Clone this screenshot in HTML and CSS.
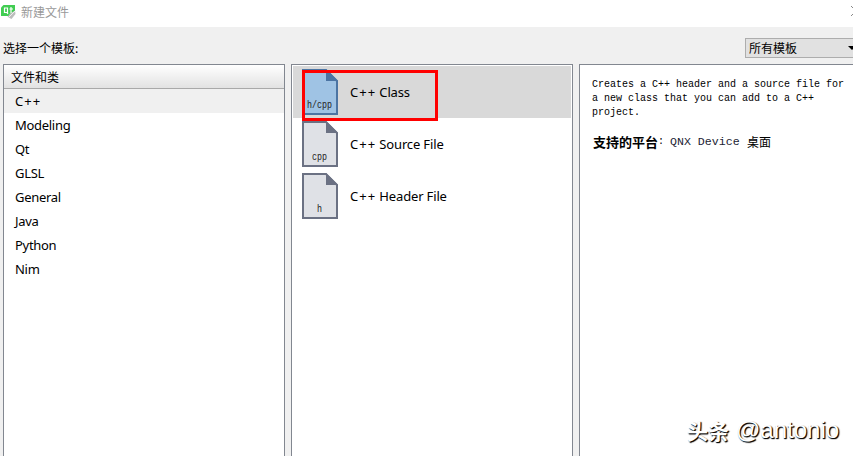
FILE: index.html
```html
<!DOCTYPE html>
<html lang="zh-CN">
<head>
<meta charset="utf-8">
<title>新建文件</title>
<link rel="stylesheet" href="styles.css">
</head>
<body>
<header class="titlebar">
  <svg class="logo" width="16" height="16" viewBox="0 0 16 16">
    <path d="M2.500 1H14V10L11.500 12H0V3.500Z" fill="#41cd52"/>
    <path d="M3.500 4H6.500V8.500H3.500ZM5.500 8L7 10M10 3V9H12M8.500 5H12" fill="none" stroke="#fff" stroke-width="1.200"/>
    <path d="M14 6.500L14.500 10L10.500 15L6.500 13L8.500 10Z" fill="#bdbdbd"/>
    <path d="M14 7L7 14" stroke="#eee" stroke-width="1"/>
  </svg>
  <span class="title">新建文件</span>
  <svg class="close" width="2" height="12" viewBox="0 0 2 12"><path d="M0 1L2 3M0 11L2 9" stroke="#888" fill="none"/></svg>
</header>
<div class="toolbar">
  <span class="prompt">选择一个模板:</span>
  <div class="select"><span>所有模板</span><i class="arrow"></i></div>
</div>
<main class="panels">
  <section class="panel">
    <div class="heading">文件和类</div>
    <ul class="categories">
      <li class="selected"><span class="wide">C++</span></li><li>Modeling</li><li>Qt</li><li>GLSL</li><li>General</li><li>Java</li><li>Python</li><li>Nim</li>
    </ul>
  </section>
  <section class="panel templates">
    <div class="template active">
      <svg class="file" width="36" height="46" viewBox="0 0 36 46"><path class="page" d="M1 1H24L35 12V45H1Z"/><path class="fold" d="M24 0L36 12H24Z"/><text x="5" y="39" textLength="25" lengthAdjust="spacingAndGlyphs">h/cpp</text></svg>
      <span><span class="wide">C++</span> Class</span>
      <div class="marker"></div>
    </div>
    <div class="template">
      <svg class="file" width="36" height="46" viewBox="0 0 36 46"><path class="page" d="M1 1H24L35 12V45H1Z"/><path class="fold" d="M24 0L36 12H24Z"/><text x="10" y="39" textLength="15" lengthAdjust="spacingAndGlyphs">cpp</text></svg>
      <span><span class="wide">C++</span> Source File</span>
    </div>
    <div class="template">
      <svg class="file" width="36" height="46" viewBox="0 0 36 46"><path class="page" d="M1 1H24L35 12V45H1Z"/><path class="fold" d="M24 0L36 12H24Z"/><text x="15" y="39" textLength="5" lengthAdjust="spacingAndGlyphs">h</text></svg>
      <span><span class="wide">C++</span> Header File</span>
    </div>
  </section>
  <section class="panel details">
    <p>Creates a C++ header and a source file for<br>a new class that you can add to a C++<br>project.</p>
    <p class="platforms"><b>支持的平台</b><span class="colon">:</span><span class="device">QNX Device</span><span class="desktop">桌面</span></p>
  </section>
</main>
<div class="watermark"><span class="brand">头条</span><span class="handle">@antonio</span></div>
</body>
</html>
```

FILE: styles.css
```css
* { box-sizing: border-box; }
body {
  margin: 0;
  width: 853px;
  height: 456px;
  overflow: hidden;
  display: flex;
  flex-direction: column;
  background: #f0f0f0;
  color: #000;
  font: 13px/24px "Noto Sans", "Noto Sans CJK SC", sans-serif;
}
.titlebar {
  height: 27px;
  flex: none;
  display: flex;
  align-items: flex-start;
  padding-top: 4px;
  background: #fff;
}
.logo { margin-left: 1px; }
.title {
  margin-left: 4px;
  color: #999;
  font: 12px/15px "Noto Sans CJK SC", sans-serif;
}
.close { margin: 1px 0 0 auto; }
.toolbar {
  height: 37px;
  flex: none;
  display: flex;
  justify-content: space-between;
  padding: 11px 0 0 3px;
  font: 12px/19px "Noto Sans CJK SC", sans-serif;
}
.select {
  width: 112px;
  height: 20px;
  margin-right: -4px;
  padding-left: 3px;
  display: flex;
  justify-content: space-between;
  border: 1px solid #adadad;
  background: #e1e1e1;
  line-height: 18px;
}
.arrow {
  width: 8px;
  height: 4px;
  margin: 7px 0 0;
  background: #000;
  clip-path: polygon(0 0, 100% 0, 50% 100%);
}
.panels {
  flex: 1;
  display: grid;
  grid-template-columns: 282px 282px 282px;
  gap: 6px;
  padding-left: 3px;
}
.panel {
  border: 1px solid #828790;
  border-bottom: 0;
  background: #fff;
  min-width: 0;
}
.heading {
  height: 24px;
  padding-left: 7px;
  border-bottom: 1px solid #a9a9a9;
  background: linear-gradient(#fff, #e2e2e2);
  font: 12px/24px "Noto Sans CJK SC", sans-serif;
}
.categories { margin: 0; padding: 0; list-style: none; letter-spacing: -0.3px; }
.categories li { height: 24px; padding-left: 11px; }
.categories .selected { background: #f0f0f0; }
.wide { letter-spacing: 1px; }
.templates { padding: 1px; }
.template {
  position: relative;
  height: 52px;
  display: flex;
  align-items: center;
  gap: 12px;
  padding-left: 9px;
  letter-spacing: -0.15px;
}
.active { background: #d9d9d9; }
.marker {
  position: absolute;
  left: 9px;
  top: 4px;
  width: 136px;
  height: 51px;
  border: 3px solid #f00;
  z-index: 1;
}
.page { fill: #dfe1e6; stroke: #6b7183; stroke-width: 2; }
.fold { fill: #6b7183; }
.active .page { fill: #9fc3e4; stroke: #4b74a3; }
.active .fold { fill: #4b74a3; }
.file text {
  font: 11px "Liberation Mono", monospace;
  letter-spacing: 0;
  fill: #222;
}
.details { padding: 13px 0 0 12px; font: 10px/14px "Liberation Mono", monospace; }
.details p { margin: 0; white-space: nowrap; }
.details .platforms {
  display: flex;
  margin-top: 13px;
  line-height: 18px;
}
.platforms b, .desktop { font-family: "Noto Sans CJK SC", sans-serif; font-size: 12px; }
.platforms b { padding-left: 1px; font-size: 13px; }
.colon { width: 12px; }
.device { width: 77px; font-size: 11.600px; color: #223; }
.watermark {
  position: absolute;
  left: 687px;
  top: 414px;
  display: flex;
  gap: 7px;
  color: #fff;
  font: 24px/32px "Liberation Sans", "Noto Sans CJK SC", sans-serif;
  text-shadow: 1px 1px 1px #000, 1px 1px 1px #333;
}
.brand { font: 700 21px/32px "Noto Sans CJK SC", sans-serif; }
```
